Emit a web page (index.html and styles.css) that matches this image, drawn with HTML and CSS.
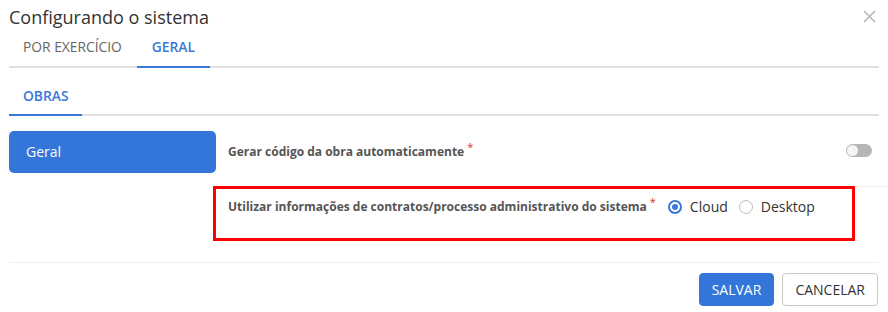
FILE: index.html
```html
<!DOCTYPE html>
<html lang="pt">
<head>
<meta charset="utf-8">
<link rel="stylesheet" href="styles.css">
</head>
<body>
<div class="dialog">
  <div class="header">
    <h1 class="title">Configurando o sistema</h1>
    <span class="close" aria-label="Fechar">
      <svg width="13" height="13" viewBox="0 0 13 13"><path d="M1 1L12 12M12 1L1 12" stroke="#b3b3b3" stroke-width="1.5" fill="none"/></svg>
    </span>
  </div>
  <div class="tabs">
    <div class="tab">POR EXERCÍCIO</div>
    <div class="tab active">GERAL</div>
  </div>
  <div class="tabs sub">
    <div class="tab active">OBRAS</div>
  </div>
  <div class="content">
    <div class="side">
      <div class="side-item">Geral</div>
    </div>
    <div class="rows">
      <div class="row first">
        <span class="label">Gerar código da obra automaticamente<span class="req">*</span></span>
        <span class="toggle"><span class="knob"></span></span>
      </div>
      <div class="row highlighted">
        <span class="label">Utilizar informações de contratos/processo administrativo do sistema<span class="req">*</span></span>
        <label class="radio"><span class="dot checked"></span>Cloud</label>
        <label class="radio"><span class="dot"></span>Desktop</label>
      </div>
    </div>
  </div>
  <div class="footer">
    <button class="btn primary">SALVAR</button>
    <button class="btn">CANCELAR</button>
  </div>
</div>
</body>
</html>
```
FILE: styles.css
```css
* { box-sizing: border-box; }
html, body { margin: 0; padding: 0; background: #fff; }
body { font-family: "Open Sans", "Noto Sans", sans-serif; color: #333; width: 888px; height: 312px; overflow: hidden; }
.dialog { padding: 0 9px; }
.header { display: flex; justify-content: space-between; align-items: center; height: 36px; padding-bottom: 3px; }
.title { margin: 0; font-size: 18px; font-weight: 400; color: #333; }
.close { display: flex; margin-right: 3px; }
.tabs { display: flex; border-bottom: 2px solid #e0e0e0; height: 32px; }
.tab { font-size: 13.8px; color: #666; padding: 0 15px 0 14px; height: 32px; line-height: 22px; margin-bottom: -2px; border-bottom: 2px solid transparent; }
.tab.active { color: #3a78d8; font-weight: 600; border-bottom-color: #3a78d8; padding: 0 15px; }
.tabs.sub { height: 48px; }
.tabs.sub .tab { height: 48px; line-height: 56px; padding: 0 14px; }
.content { display: flex; padding-top: 15px; }
.side { width: 207px; flex: none; }
.side-item { background: #3375d9; color: #fff; font-size: 14px; height: 42px; line-height: 42px; padding-left: 17px; border-radius: 5px; }
.rows { flex: 1; margin-right: -9px; }
.row { display: flex; align-items: flex-start; padding-left: 12px; font-size: 12px; }
.label { font-weight: 700; color: #555; font-size: 12px; line-height: 18px; }
.row.first { height: 56px; border-bottom: 1px solid #eeeeee; padding-right: 16px; padding-top: 12px; }
.req { color: #e03030; font-size: 11px; position: relative; top: -5px; margin-left: 3px; font-weight: 400; }
.toggle { margin-left: auto; margin-top: 1px; width: 26px; height: 13px; border-radius: 7px; background: #b5b5b5; position: relative; }
.knob { position: absolute; left: 1px; top: 1px; width: 11px; height: 11px; border-radius: 50%; background: #f5f5f5; }
.highlighted { outline: 3px solid #ff0000; outline-offset: -3px; width: 642px; margin-left: -3px; margin-top: -1px; padding-left: 15px; height: 55px; padding-top: 12px; }
.radio { display: flex; align-items: center; font-size: 14px; color: #333; margin-left: 12px; line-height: 18px; }
.radio + .radio { margin-left: 11px; }
.dot { width: 14px; height: 14px; border-radius: 50%; border: 1px solid #bdbdbd; margin-right: 8px; position: relative; }
.dot.checked { border: 2px solid #3a78d8; }
.dot.checked::after { content: ""; position: absolute; left: 2px; top: 2px; width: 6px; height: 6px; border-radius: 50%; background: #3a78d8; }
.footer { margin-top: 21px; border-top: 1px solid #eeeeee; display: flex; justify-content: flex-end; gap: 8px; padding-top: 10px; padding-right: 1px; }
.btn { font-family: "Open Sans", sans-serif; font-size: 14px; height: 33px; border-radius: 4px; border: 1px solid #c8c8c8; background: #fff; color: #333; padding: 0 12px; }
.btn.primary { background: #3375d9; border-color: #3375d9; color: #fff; padding: 0 12px; }
```
